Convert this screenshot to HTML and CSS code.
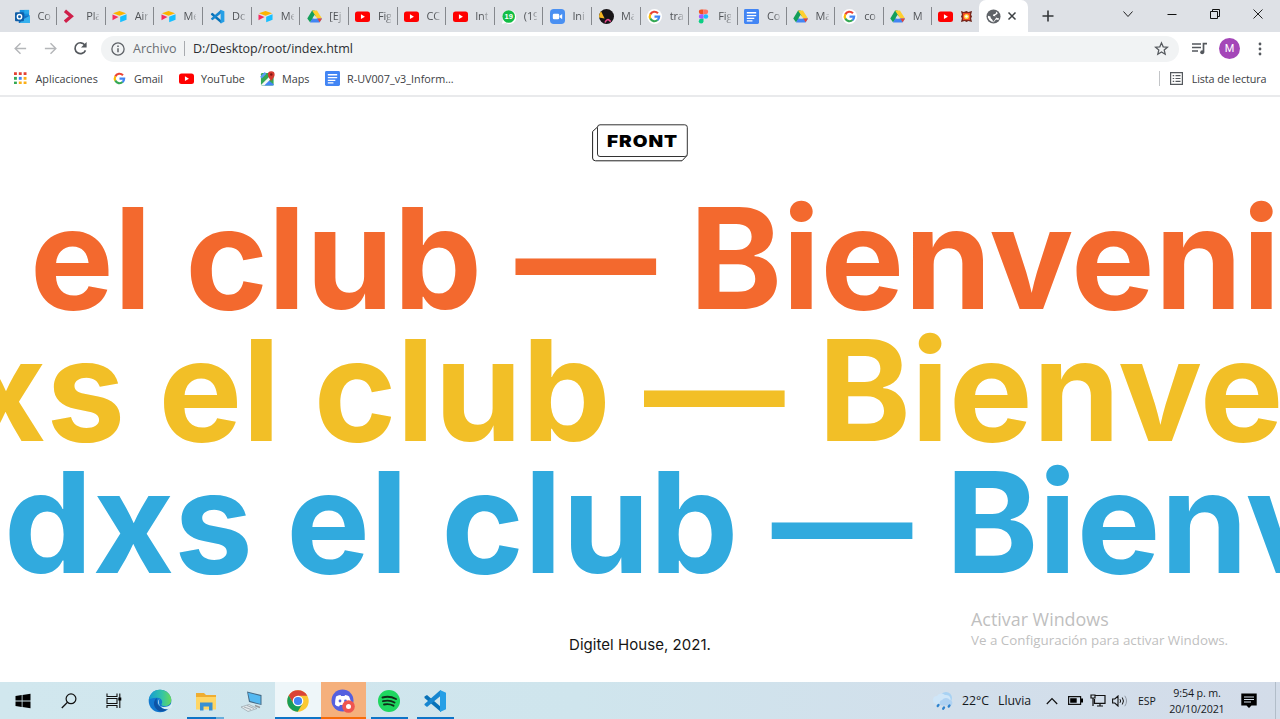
FILE: index.html
```html
<!DOCTYPE html>
<html lang="es">
<head>
<meta charset="utf-8">
<title>Front</title>
<link rel="stylesheet" href="styles.css">
</head>
<body>
<svg class="sprite" aria-hidden="true">
  <symbol id="outlook" viewBox="0 0 16 16"><path fill="#1490df" d="M5 1h10v8H5z"/><path fill="#28a8ea" d="M10 1h5v4h-5z"/><path fill="#0a5ea8" d="M4 5h6v4H4z"/><path fill="#1272c4" d="M4 8l12-1v8H4z"/><path fill="#35b0ee" d="M9 11l7-4v8H5z"/><rect y="3.5" width="9.5" height="9.5" rx="1" fill="#0f5ea8"/><circle cx="4.8" cy="8.2" r="2.3" fill="none" stroke="#fff" stroke-width="1.5"/></symbol>
  <symbol id="play" viewBox="0 0 16 16"><path d="M1 2l6.800 5.800L1 13.600" fill="none" stroke="#cf1f4a" stroke-width="3.600"/></symbol>
  <symbol id="airtable" viewBox="0 0 16 16"><path fill="#fcb400" d="M1 4.500L8 2l7 2.500L8 7.200z"/><path fill="#18bfff" d="M8.700 8.300L15.500 5.500v6L8.700 14z"/><path fill="#f82b60" d="M.5 5.800L6.900 8.500.5 12z"/></symbol>
  <symbol id="vscode" viewBox="0 0 24 24"><path d="M1.500 7.500L4 6l14 12v5L1.500 9z" fill="#0872b8"/><path d="M1.500 15l16-14v6L4 18l-2.500-2z" fill="#1686d0"/><path d="M17 1l6 2.700v16.600L17 23z" fill="#269fe6"/></symbol>
  <symbol id="drive" viewBox="0 0 16 16"><path fill="#149f5a" d="M5.400 1.500H8L10.500 6 3.200 14 .3 10z"/><path fill="#ffcf2f" d="M5.400 1.500h5.200L16 10h-5.200z"/><path fill="#4285f4" d="M3.200 14.500L5.700 10H16l-2.700 4.500z"/><path fill="#ea4335" d="M11 10h5l-2.500 4z"/><path fill="#dee1e6" d="M8 6l2.300 4H5.700z"/></symbol>
  <symbol id="youtube" viewBox="0 0 16 16"><rect y="2.600" width="16" height="11.200" rx="2.700" fill="#f00"/><path fill="#fff" d="M6.300 5.700l4.300 2.500-4.300 2.500z"/></symbol>
  <symbol id="whatsapp" viewBox="0 0 16 16"><path fill="#fff" d="M1 15.600l1-4A7.500 7.500 0 1 1 5 15z"/><circle cx="8.200" cy="8" r="6.700" fill="#12bd45"/><text x="8.200" y="11" text-anchor="middle" font-family="Liberation Sans" font-weight="bold" font-size="8" fill="#fff">19</text></symbol>
  <symbol id="zoomapp" viewBox="0 0 16 16"><rect width="16" height="16" rx="4" fill="#4a90f2"/><rect x="3" y="5" width="6.800" height="6" rx="1.300" fill="#fff"/><path fill="#fff" d="M10.300 7.200L13 5.300v5.500l-2.700-2z"/></symbol>
  <symbol id="dark" viewBox="0 0 16 16"><circle cx="8" cy="8" r="8" fill="#171417"/><path fill="#f5b621" d="M2.200 2.500L6 10 0 9C0 6 1 4 2.200 2.500z"/><path d="M6.500 14.500c1-3 3-4 4.500-2.500l1.500 1.500" fill="none" stroke="#ee4b91" stroke-width="1.700"/></symbol>
  <symbol id="google" viewBox="0 0 16 16"><circle cx="8" cy="8" r="8" fill="#fff"/><g fill="none" stroke-width="2.300"><path stroke="#ea4335" d="M3.500 5.800A5 5 0 0 1 11.700 4.500"/><path stroke="#fbbc05" d="M3.600 10.400a5 5 0 0 1 0-4.800"/><path stroke="#34a853" d="M3.500 10.200A5 5 0 0 0 11.300 11.800"/><path stroke="#4285f4" d="M8 8.100h5A5 5 0 0 1 11.200 11.900"/></g></symbol>
  <symbol id="figma" viewBox="0 0 16 16"><path fill="#f24e1e" d="M8 .5H5.500a2.500 2.500 0 0 0 0 5H8z"/><path fill="#ff7262" d="M8 .5h2.500a2.500 2.500 0 0 1 0 5H8z"/><path fill="#a259ff" d="M8 5.500H5.500a2.500 2.500 0 0 0 0 5H8z"/><circle cx="10.500" cy="8" r="2.500" fill="#1abcfe"/><path fill="#0acf83" d="M8 10.500H5.500A2.500 2.500 0 1 0 8 13z"/></symbol>
  <symbol id="docs" viewBox="0 0 16 16"><rect width="16" height="16" rx="1.500" fill="#4285f4"/><path d="M3 4h10M3 7h10M3 10h8M3 12.700h6" stroke="#fff" stroke-width="1.400"/></symbol>
  <symbol id="burst" viewBox="0 0 12 14"><path fill="#6c2118" d="M0 1l3 1 3-1 2 1 4-1-1 4 1 2-1 2 1 4-4-1-2 1-2-1-4 1 1-4-1-2 1-2z"/><path fill="#f04a23" d="M2 3l8 0v8H2z"/><circle cx="6" cy="7" r="2.800" fill="#ffd23c"/><circle cx="6" cy="7" r="1.400" fill="#fff"/></symbol>
  <symbol id="globe" viewBox="0 0 16 16"><circle cx="8" cy="8" r="7.500" fill="#5f6368"/><path fill="#fff" d="M9.500 2.200l1.500.8-.8 2-2.500.8-.2 1.700 3 .3.800 1.800 2.600.3-.7 1.800-2.500-.5-2.500 3H7.200v-2.300L5 9.700 4.800 8 2.200 7.300 2 9l1.500 2.800 3 2H7.500l2.700-3.400L11 8.500 9.500 6.800l2.500-1.600.5-1A7 7 0 0 0 9.500 2.200z"/></symbol>
  <symbol id="back" viewBox="0 0 16 16"><path d="M14 8H2.500M8 2.300L2.300 8 8 13.700" fill="none" stroke="currentColor" stroke-width="1.500"/></symbol>
</svg>

<div class="browser">
  <header class="tabs">
    <div class="tab"><svg><use href="#outlook"/></svg><span>Co</span></div>
    <div class="tab"><svg><use href="#play"/></svg><span>Pla</span></div>
    <div class="tab"><svg><use href="#airtable"/></svg><span>Air</span></div>
    <div class="tab"><svg><use href="#airtable"/></svg><span>Me</span></div>
    <div class="tab"><svg><use href="#vscode"/></svg><span>Do</span></div>
    <div class="tab"><svg><use href="#airtable"/></svg><span>Me</span></div>
    <div class="tab"><svg><use href="#drive"/></svg><span>[Ej</span></div>
    <div class="tab"><svg><use href="#youtube"/></svg><span>Fig</span></div>
    <div class="tab"><svg><use href="#youtube"/></svg><span>CC</span></div>
    <div class="tab"><svg><use href="#youtube"/></svg><span>Int</span></div>
    <div class="tab"><svg><use href="#whatsapp"/></svg><span>(19</span></div>
    <div class="tab"><svg><use href="#zoomapp"/></svg><span>Ini</span></div>
    <div class="tab"><svg><use href="#dark"/></svg><span>Ma</span></div>
    <div class="tab"><svg><use href="#google"/></svg><span>tra</span></div>
    <div class="tab"><svg><use href="#figma"/></svg><span>Fig</span></div>
    <div class="tab"><svg><use href="#docs"/></svg><span>Co</span></div>
    <div class="tab"><svg><use href="#drive"/></svg><span>Ma</span></div>
    <div class="tab"><svg><use href="#google"/></svg><span>co</span></div>
    <div class="tab"><svg><use href="#drive"/></svg><span>M</span></div>
    <div class="tab tab-last"><svg><use href="#youtube"/></svg><svg class="burst"><use href="#burst"/></svg></div>
    <div class="tab-active"><svg class="globe"><use href="#globe"/></svg><svg class="x" viewBox="0 0 10 10"><path d="M1.500 1.500l7 7m0-7l-7 7" stroke="#3c4043" stroke-width="1.500"/></svg></div>
    <svg class="plus" viewBox="0 0 12 12"><path d="M6 .5v11M.5 6h11" stroke="#333639" stroke-width="1.600"/></svg>
    <div class="window-controls">
      <svg viewBox="0 0 12 12"><path d="M1.500 3.500L6 8.500l4.500-5" fill="none" stroke="#222"/></svg>
      <svg viewBox="0 0 12 12"><path d="M1.500 6.500h9" stroke="#111"/></svg>
      <svg viewBox="0 0 12 12"><path d="M1.500 3.500h7v7h-7zM3.500 3.500v-2h7v7h-2" fill="none" stroke="#111"/></svg>
      <svg viewBox="0 0 12 12"><path d="M1.500 1.500l9 9m0-9l-9 9" stroke="#222"/></svg>
    </div>
  </header>

  <div class="toolbar">
    <svg class="nav"><use href="#back"/></svg>
    <svg class="nav forward"><use href="#back"/></svg>
    <svg class="nav reload" viewBox="0 0 16 16"><path d="M13.300 10A5.800 5.800 0 1 1 12.600 4.200" fill="none" stroke="#54585d" stroke-width="1.800"/><path d="M14.500 1v6h-6z" fill="#54585d"/></svg>
    <div class="omnibox">
      <svg class="info" viewBox="0 0 14 14"><circle cx="7" cy="7" r="6.100" fill="none" stroke="#5f6368" stroke-width="1.300"/><path d="M7 6.200v4M7 3.500v1.500" stroke="#5f6368" stroke-width="1.500"/></svg>
      <span class="scheme">Archivo</span>
      <span class="url">D:/Desktop/root/index.html</span>
      <svg class="star" viewBox="0 0 24 24"><path d="M12 3l2.700 6.300 6.800.6-5.200 4.500 1.600 6.700L12 17.500l-5.900 3.600 1.600-6.700L2.500 9.900l6.800-.6z" fill="none" stroke="#54585d" stroke-width="2"/></svg>
    </div>
    <svg class="queue" viewBox="0 0 15 13"><path d="M0 2h9M0 5.500h9M0 9h6" stroke="#54585d" stroke-width="1.500"/><path d="M11.500 10V1.700H15" fill="none" stroke="#54585d" stroke-width="1.700"/><circle cx="10.200" cy="10.300" r="2" fill="#54585d"/></svg>
    <span class="avatar">M</span>
    <svg class="more" viewBox="0 0 4 14"><g fill="#54585d"><circle cx="2" cy="2" r="1.400"/><circle cx="2" cy="7" r="1.400"/><circle cx="2" cy="12" r="1.400"/></g></svg>
  </div>

  <nav class="bookmarks">
    <svg class="apps" viewBox="0 0 13 13"><path d="M0 1.700h13" stroke="#e34133" stroke-width="3" stroke-dasharray="3 2"/><path d="M0 6.600h3" stroke="#34a853" stroke-width="3"/><path d="M5 6.600h3" stroke="#4285f4" stroke-width="3"/><path d="M10 6.600h3" stroke="#fbaf17" stroke-width="3"/><path d="M0 11.500h3" stroke="#34a853" stroke-width="3"/><path d="M5 11.500h8" stroke="#fbaf17" stroke-width="3" stroke-dasharray="3 2"/></svg>
    <span class="b-apps">Aplicaciones</span>
    <svg><use href="#google"/></svg><span class="b-gmail">Gmail</span>
    <svg><use href="#youtube"/></svg><span class="b-youtube">YouTube</span>
    <svg viewBox="0 0 16 16"><rect x="1" y="2" width="13.500" height="13.500" rx="1.500" fill="#34a853"/><path fill="#4285f4" d="M8 9l6.500 5v1.500H3z"/><path fill="#f5f5f5" d="M1 15L12 4l2 2-9.500 9.500z"/><path d="M1 7l5-5" stroke="#5c9cf5" stroke-width="2.500"/><path fill="#d43b2f" d="M12 .2a3.600 3.600 0 0 1 3.600 3.700C15.600 6.500 12 10.500 12 10.500S8.400 6.500 8.400 3.900A3.600 3.600 0 0 1 12 .2z"/><circle cx="12" cy="3.800" r="1.300" fill="#811411"/></svg><span class="b-maps">Maps</span>
    <svg><use href="#docs"/></svg><span class="b-doc">R-UV007_v3_Inform...</span>
    <div class="reading"><svg class="list" viewBox="0 0 13 13"><path d="M.6.600h11.800v11.800H.6z" fill="none" stroke="#54585d" stroke-width="1.200"/><path d="M2.700 3.700h1.500M5.500 3.700h5M2.700 6.500h1.500M5.500 6.500h5M2.700 9.300h1.500M5.500 9.300h5" stroke="#54585d" stroke-width="1.200"/></svg><span>Lista de lectura</span></div>
  </nav>
</div>

<main class="page">
  <svg class="logo" viewBox="0 0 96 38"><path d="M5.500 3L.6 7.500V34q0 2.800 3 2.800H90L95 31.500" fill="none" stroke="#222" stroke-width="1"/><rect x="5.500" y=".8" width="89.800" height="31.700" rx="2.500" fill="#fff" stroke="#333" stroke-width="1"/><text x="15" y="22.500" textLength="71" lengthAdjust="spacingAndGlyphs" class="logo-text">FRONT</text></svg>
  <section class="marquee">
    <p class="line orange">el club — Bienveni</p>
    <p class="line yellow">xs el club — Bienve</p>
    <p class="line blue">dxs el club — Bienv</p>
  </section>
  <footer class="credit">Digitel House, 2021.</footer>
  <aside class="activate"><strong>Activar Windows</strong><span>Ve a Configuración para activar Windows.</span></aside>
</main>

<div class="taskbar">
  <div class="cell"><svg class="i16" viewBox="0 0 16 16"><path d="M.5 3l6.200-.9v5.500H.5zM7.500 2L15.500.8v6.800h-8zM.5 8.400h6.200v5.500L.5 13zM7.500 8.400h8v6.800l-8-1.200z" fill="#000"/></svg></div>
  <div class="cell"><svg class="i16" viewBox="0 0 16 16"><circle cx="10" cy="5.800" r="4.900" fill="none" stroke="#111" stroke-width="1.200"/><path d="M6.500 9.300L.8 15" stroke="#111" stroke-width="1.300"/></svg></div>
  <div class="cell"><svg class="i16" viewBox="0 0 16 16"><path d="M1 .5v3h10v-3M1 15v-2.500h10V15M1 5.500h10v5H1zM13.800.5V15" fill="none" stroke="#111" stroke-width="1.100"/><path d="M12.300 4.500h3v3h-3z"/></svg></div>
  <div class="cell"><svg class="i24" viewBox="0 0 24 24"><defs><linearGradient id="edge-top"><stop offset="0" stop-color="#149bd5"/><stop offset=".6" stop-color="#35c4a4"/><stop offset="1" stop-color="#67d95b"/></linearGradient></defs><circle cx="12" cy="12" r="11.300" fill="#1278cf"/><path fill="url(#edge-top)" d="M.8 11C2 4 7-.2 13 .8c6 .8 10.300 5.300 10.300 10.200 0 4-3.300 6-6.300 6-2.500 0-4-1-3.500-2 1.800-2.500 0-6-4-6.200C5.500 8.500 2 9.500.8 11z"/><path fill="#0d53a5" d="M9 9c-5 3-3.500 10.500 2 13 4 1.500 8-.5 10.500-4C15 21.500 7 17 9 9z"/><path d="M11.500 10c-3 2.500-1 8 4 8 3.500 0 6-1 8.500-4v4c-1 1-1.500 1.500-2.500 1.500-3 1.500-8 .5-10-3.500-1-2-1-4.500 0-6z" fill="#d8edf4"/></svg></div>
  <div class="cell explorer"><svg class="i22" viewBox="0 0 22 20"><path fill="#efad31" d="M1 2h8l2 2h10v6H1z"/><path fill="#ffd665" d="M1 6h20v12.500H1z"/><path fill="#3990d3" d="M5 11.500h12.500v8h-3.500v-4H8.500v4H5z"/></svg></div>
  <div class="cell"><svg class="i24" viewBox="0 0 24 24"><path fill="#456a86" d="M7 2.500l14.500 3.500v10L9 13z"/><path fill="#55b9f1" d="M8 3.800L20.500 7v8L10 12z"/><path fill="#e5eaed" stroke="#8c989f" stroke-width=".6" d="M1 18l8-2.500 8 4-9 3z"/><path d="M4 18l7 2.500M7 16.500l7 3" stroke="#8c989f" stroke-width=".7"/><path d="M15 16.500l5 2" stroke="#999" stroke-width="1.500"/></svg></div>
  <div class="cell chrome"><svg class="i22" viewBox="0 0 22 22"><circle cx="11" cy="11" r="10.700" fill="#fbc934"/><path fill="#da4437" d="M1.700 5.600A10.700 10.700 0 0 1 20.300 5.700H11L6.400 13.600z"/><path fill="#199d58" d="M1.700 5.600A10.700 10.700 0 0 0 10.700 21.700L15.500 13.700 11 16 6.400 13.600z"/><circle cx="11" cy="11" r="5.300" fill="#fff"/><circle cx="11" cy="11" r="4.100" fill="#4285f4"/></svg></div>
  <div class="cell discord"><svg class="i24" viewBox="0 0 24 24"><circle cx="11.500" cy="11.500" r="11" fill="#5560df"/><path fill="#fff" d="M5 7.500Q7 6 9.500 6l.6 1q1.700-.2 3.400 0l.6-1q2.500 0 4 1.500 2 4 1.900 8-2 2-4.300 2l-1-1.500H9l-1 1.500q-2.500 0-4-2Q4 11 5 7.500z"/><circle cx="9" cy="12" r="1.400" fill="#5560df"/><circle cx="14.500" cy="12" r="1.400" fill="#5560df"/><circle cx="17.500" cy="17.500" r="6.300" fill="#ef5550"/><circle cx="17.500" cy="17.500" r="2.500" fill="#fff"/></svg></div>
  <div class="cell open"><svg class="i22" viewBox="0 0 22 22"><circle cx="11" cy="11" r="11" fill="#1ed760"/><path d="M4.500 7.500Q11.500 5.500 18 9M5 11.200Q11.500 9.500 16.500 12.500M6 14.500q5-1.200 9.500 1.200" fill="none" stroke="#102c19" stroke-width="1.900" stroke-linecap="round"/></svg></div>
  <div class="cell open"><svg class="i24"><use href="#vscode"/></svg></div>

  <div class="tray">
    <svg class="weather" viewBox="0 0 21 20"><circle cx="13" cy="7" r="6" fill="#a8d2f3"/><path fill="#cfe6f8" d="M4 13a4 4 0 0 1 0-8 5 5 0 0 1 8-1 4 4 0 0 1 2 9z"/><path fill="#afd2f2" d="M8 14.500a3 3 0 0 1 1-5.500 5 5 0 0 1 8 0 3 3 0 0 1 1 5.500z"/><path d="M5.500 14l-.8 1M11 16.500l-.8 1.200M16.500 14.500l-.8 1" stroke="#2c83cf" stroke-width="2.300" stroke-linecap="round"/></svg>
    <span class="temp">22°C</span><span class="rain">Lluvia</span>
    <svg class="chev" viewBox="0 0 12 8"><path d="M.8 7L6 1.500 11.200 7" fill="none" stroke="#111" stroke-width="1.200"/></svg>
    <svg class="battery" viewBox="0 0 15 9"><path d="M.6.600h12v7.800H.6z" fill="none" stroke="#111" stroke-width="1.200"/><path d="M2.200 2.200h6.500v4.600H2.200zM13 2.500h2v4h-2z"/></svg>
    <svg class="network" viewBox="0 0 16 13"><path d="M5.500 1.500h9.500v7.800H4.500V5M7 12h6M10 9.300V12M1 1h4v3H1zM3 4v8" fill="none" stroke="#111" stroke-width="1.200"/></svg>
    <svg class="volume" viewBox="0 0 16 12"><path d="M.6 4h2.200L6 1v10L2.800 8H.6z" fill="none" stroke="#111" stroke-width="1.100"/><path d="M8 4.200q1.200 1.800 0 3.600M10.300 2.500q2.300 3.500 0 7" fill="none" stroke="#111"/><path d="M12.800.8q3.500 5.200 0 10.400" fill="none" stroke="#929aa5"/></svg>
    <span class="lang">ESP</span>
    <div class="clock"><span>9:54 p. m.</span><span class="date">20/10/2021</span></div>
    <svg class="notice" viewBox="0 0 16 16"><path d="M.3.500h15.400v12H10.500L8 15l-2.500-2.500H.3z"/><path d="M3 4h10M3 6.500h10M3 9h7" stroke="#d5dfeb" stroke-width="1"/></svg>
  </div>
</div>
</body>
</html>
```
FILE: styles.css
```css
* { box-sizing: border-box; }
body {
  margin: 0;
  width: 1280px;
  height: 719px;
  overflow: hidden;
  display: flex;
  flex-direction: column;
  background: #fff;
  color: #3c4043;
  font-family: "Open Sans", "Noto Sans", sans-serif;
  font-size: 10.8px;
  white-space: nowrap;
}
svg { display: block; flex: none; }
.sprite { position: absolute; width: 0; height: 0; }

.browser { flex: none; height: 97px; border-bottom: 2px solid #e9eaec; }

/* Tab strip */
.tabs { display: flex; align-items: center; height: 32px; padding-left: 8.600px; background: #dee1e6; }
.tab {
  display: flex;
  align-items: center;
  flex: none;
  width: 48.640px;
  height: 18px;
  padding-left: 6.500px;
  border-right: 1px solid #85888d;
}
.tab svg { width: 15px; height: 15px; }
.tab span {
  width: 13px;
  margin-left: 7.500px;
  overflow: hidden;
  line-height: 18px;
  font-size: 11px;
  letter-spacing: -.2px;
  color: #505357;
  -webkit-mask-image: linear-gradient(90deg, #000 55%, transparent 115%);
  mask-image: linear-gradient(90deg, #000 55%, transparent 115%);
}
.tab-last { width: 46.500px; padding-left: 6px; border: 0; }
.tab .burst { width: 11px; height: 13px; margin-left: 8px; }
.tab-active {
  display: flex;
  align-items: center;
  flex: none;
  width: 49px;
  height: 32px;
  padding-left: 7.500px;
  border-radius: 7px 7px 0 0;
  background: #fff;
}
.globe { width: 15px; height: 15px; }
.x { width: 10px; height: 10px; margin-left: 6px; }
.plus { width: 12px; height: 12px; margin-left: 14px; }
.window-controls { display: flex; gap: 31.200px; margin: -5px 0 0 68.500px; }
.window-controls svg { width: 12px; height: 12px; }

/* Toolbar */
.toolbar { display: flex; align-items: center; height: 33px; padding-left: 13px; }
.nav { width: 15px; height: 15px; margin-right: 15px; color: #b4b6b9; }
.forward { transform: scaleX(-1); }
.reload { margin-right: 13px; }
.omnibox {
  display: flex;
  align-items: center;
  width: 1078px;
  height: 26px;
  padding: 0 10px;
  border-radius: 13px;
  background: #f1f3f4;
}
.info { width: 14px; height: 14px; }
.scheme {
  width: 52px;
  margin-left: 8px;
  border-right: 1px solid #a8abaf;
  font-size: 12.500px;
  line-height: 15px;
  color: #6a6e73;
}
.url { margin-left: 8px; font-size: 12.500px; color: #2b2e32; letter-spacing: -.05px; }
.star { width: 15px; height: 15px; margin-left: auto; }
.queue { width: 15px; height: 13px; margin-left: 13px; }
.avatar {
  width: 21px;
  height: 21px;
  margin-left: 12px;
  border-radius: 50%;
  background: #a446b8;
  color: #fff;
  text-align: center;
  font: 11px/21px Roboto, sans-serif;
}
.more { width: 4px; height: 14px; margin-left: 18px; }

/* Bookmarks */
.bookmarks { display: flex; align-items: center; height: 26px; padding-left: 14px; }
.bookmarks svg { width: 15px; height: 15px; margin-right: 7px; }
.bookmarks .apps { width: 12.500px; height: 12.500px; margin-right: 9px; }
.b-apps { width: 76.500px; }
.b-gmail { width: 45px; letter-spacing: -.1px; }
.b-youtube { width: 59px; letter-spacing: -.1px; }
.b-maps { width: 43px; }
.reading { display: flex; align-items: center; height: 15px; margin-left: auto; margin-right: 13.500px; padding-left: 10px; border-left: 1px solid #c3c5c8; }
.reading span { letter-spacing: -.1px; }
.bookmarks .list { width: 13px; height: 13px; margin-right: 9px; }

/* Page */
.page { position: relative; display: flex; flex-direction: column; align-items: center; height: 585px; padding-top: 27px; font-family: Inter, sans-serif; }
.logo { width: 96px; height: 38px; }
.logo-text { font: 900 16.500px Inter, sans-serif; fill: #000; letter-spacing: .8px; }
.marquee { width: 1280px; margin-top: 30px; overflow: hidden; }
.line {
  margin: 0;
  font-size: 140.600px;
  font-weight: 700;
  line-height: 132px;
  font-feature-settings: "calt" 0;
}
.orange { color: #f3692e; padding-left: 30px; }
.yellow { color: #f2bf27; margin-left: -35px; }
.blue { color: #31aade; padding-left: 4px; }
.credit { margin-top: 47px; font-size: 15px; line-height: 20px; color: #151515; letter-spacing: .04px; }
.activate {
  position: absolute;
  left: 971px;
  bottom: 32px;
  display: flex;
  flex-direction: column;
  font-family: "Open Sans", sans-serif;
  color: #bfbfbf;
}
.activate strong { font-size: 17.900px; font-weight: 400; line-height: 21px; }
.activate span { font-size: 13.350px; line-height: 20px; }

/* Taskbar */
.taskbar { display: flex; height: 37px; background: linear-gradient(90deg, #d1e7ee, #cfe5ed 45%, #d2dfeb 75%, #d3dce9); color: #15191d; }
.cell { display: flex; align-items: center; justify-content: center; width: 45.800px; height: 37px; }
.i16 { width: 16px; height: 16px; }
.i22 { width: 22px; height: 22px; }
.i24 { width: 24px; height: 24px; }
.explorer { background: linear-gradient(90deg, #0e74c7 29px, #69aedb 29px) 4px 100% / 37px 2px no-repeat; }
.chrome { background: linear-gradient(#0e74c7, #0e74c7) 0 100% / 100% 2px no-repeat #eef6f9; }
.discord { background: #f5b07c; border-bottom: 2px solid #f76b08; padding-top: 2px; }
.open { background: linear-gradient(#0e74c7, #0e74c7) 50% 100% / 37px 2px no-repeat; }
.tray { display: flex; align-items: center; flex: 1; margin-left: 475px; border-right: 1px solid #b2bdc9; margin-right: 4px; }
.weather { width: 21px; height: 20px; }
.temp { width: 36px; margin-left: 8px; font-size: 12.300px; }
.rain { width: 48px; font-size: 12.300px; }
.chev { width: 12px; height: 8px; }
.battery { width: 15px; height: 9px; margin-left: 10px; }
.network { width: 16px; height: 13px; margin-left: 7px; }
.volume { width: 16px; height: 12px; margin-left: 6px; }
.lang { width: 19px; margin-left: 10px; font-size: 10.500px; }
.clock { display: flex; flex-direction: column; align-items: center; width: 56px; margin-left: 12px; font-size: 10.700px; line-height: 16px; letter-spacing: -.15px; }
.notice { width: 16px; height: 16px; margin-left: 16px; }
```
